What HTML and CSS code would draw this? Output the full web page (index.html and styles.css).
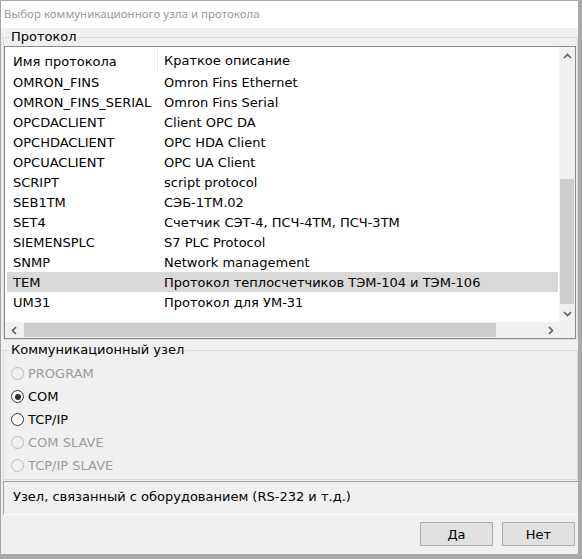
FILE: index.html
```html
<!DOCTYPE html>
<html lang="ru">
<head>
<meta charset="utf-8">
<title>Выбор коммуникационного узла и протокола</title>
<link rel="stylesheet" href="styles.css">
</head>
<body>
<div class="desk">
  <div class="win">
    <div class="title">Выбор коммуникационного узла и протокола</div>
    <div class="body">
      <fieldset class="group g1">
        <legend>Протокол</legend>
        <div class="listview">
          <div class="list">
            <div class="header">
              <div class="hcol c1">Имя протокола</div>
              <div class="hcol c2">Краткое описание</div>
            </div>
            <div class="rows">
              <div class="row"><span class="c1">OMRON_FINS</span><span class="c2">Omron Fins Ethernet</span></div>
              <div class="row"><span class="c1">OMRON_FINS_SERIAL</span><span class="c2">Omron Fins Serial</span></div>
              <div class="row"><span class="c1">OPCDACLIENT</span><span class="c2">Client OPC DA</span></div>
              <div class="row"><span class="c1">OPCHDACLIENT</span><span class="c2">OPC HDA Client</span></div>
              <div class="row"><span class="c1">OPCUACLIENT</span><span class="c2">OPC UA Client</span></div>
              <div class="row"><span class="c1">SCRIPT</span><span class="c2">script protocol</span></div>
              <div class="row"><span class="c1">SEB1TM</span><span class="c2">СЭБ-1ТМ.02</span></div>
              <div class="row"><span class="c1">SET4</span><span class="c2">Счетчик СЭТ-4, ПСЧ-4ТМ, ПСЧ-3ТМ</span></div>
              <div class="row"><span class="c1">SIEMENSPLC</span><span class="c2">S7 PLC Protocol</span></div>
              <div class="row"><span class="c1">SNMP</span><span class="c2">Network management</span></div>
              <div class="row sel"><span class="c1">TEM</span><span class="c2">Протокол теплосчетчиков ТЭМ-104 и ТЭМ-106</span></div>
              <div class="row"><span class="c1">UM31</span><span class="c2">Протокол для УМ-31</span></div>
            </div>
          </div>
          <div class="vscroll">
            <div class="arrow"><svg width="9" height="6" viewBox="0 0 9 6"><polyline points="1,5 4.5,1.5 8,5" class="chev"/></svg></div>
            <div class="vtrack"><div class="vthumb"></div></div>
            <div class="arrow"><svg width="9" height="6" viewBox="0 0 9 6"><polyline points="1,1 4.5,4.5 8,1" class="chev"/></svg></div>
          </div>
          <div class="hscroll">
            <div class="harrow"><svg width="6" height="9" viewBox="0 0 6 9"><polyline points="5,1 1.5,4.5 5,8" class="chev"/></svg></div>
            <div class="htrack"><div class="hthumb"></div></div>
            <div class="harrow"><svg width="6" height="9" viewBox="0 0 6 9"><polyline points="1,1 4.5,4.5 1,8" class="chev"/></svg></div>
          </div>
          <div class="corner"></div>
        </div>
      </fieldset>
      <fieldset class="group g2">
        <legend>Коммуникационный узел</legend>
        <div class="radios">
          <div class="radio disabled"><span class="dot"></span><span>PROGRAM</span></div>
          <div class="radio checked"><span class="dot"></span><span>COM</span></div>
          <div class="radio"><span class="dot"></span><span>TCP/IP</span></div>
          <div class="radio disabled"><span class="dot"></span><span>COM SLAVE</span></div>
          <div class="radio disabled"><span class="dot"></span><span>TCP/IP SLAVE</span></div>
        </div>
      </fieldset>
      <div class="desc">Узел, связанный с оборудованием (RS-232 и т.д.)</div>
      <div class="buttons">
        <button class="btn">Да</button>
        <button class="btn">Нет</button>
      </div>
    </div>
  </div>
</div>
</body>
</html>
```
FILE: styles.css
```css
html, body {
  margin: 0;
  padding: 0;
}
body {
  width: 582px;
  height: 559px;
  overflow: hidden;
  background: #a9a9a9;
  font-family: "DejaVu Sans", Verdana, sans-serif;
  font-size: 13px;
  color: #000;
}
.desk {
  width: 582px;
  height: 559px;
  padding-top: 1px;
  box-sizing: border-box;
}
.win {
  width: 577px;
  height: 553px;
  border-left: 1px solid #a4a4a4;
  background: #f0f0f0;
  display: flex;
  flex-direction: column;
}
.title {
  height: 27px;
  line-height: 26px;
  background: #fff;
  color: #9a9a9a;
  padding-left: 3px;
  font-family: "Noto Sans", "Open Sans", sans-serif;
  font-size: 11.5px;
}
.body {
  flex: 1;
  display: flex;
  flex-direction: column;
}
.group {
  margin: 0 0 0 2px;
  padding: 0;
  border: 1px solid #dcdcdc;
  min-width: 0;
}
.group legend {
  margin-left: 6px;
  padding: 0 1px;
  line-height: 14px;
  height: 14px;
}
.g1 {
  margin-top: 2px;
  padding-top: 2px;
}
.g2 {
  margin-top: 3px;
  padding: 5px 0 2px 0;
}
.radios {
  padding-left: 7px;
}
.listview {
  margin-right: 1px;
  border: 1px solid #8a8a8a;
  background: #fff;
  display: grid;
  grid-template-columns: 554px 16px;
  grid-template-rows: 275px 16px;
}
.list {
  overflow: hidden;
}
.header {
  height: 25px;
  display: flex;
  align-items: stretch;
}
.hcol {
  line-height: 27px;
  white-space: nowrap;
}
.hcol.c1 {
  width: 144px;
  padding-left: 8px;
  border-right: 1px solid #e5e5e5;
  margin-top: 1px;
}
.hcol.c2 {
  padding-left: 6px;
}
.rows {
  padding: 0 1px 0 2px;
}
.row {
  height: 20px;
  line-height: 21px;
  display: flex;
  white-space: nowrap;
}
.row .c1 {
  width: 144px;
  padding-left: 6px;
}
.row .c2 {
  padding-left: 7px;
}
.row.sel {
  background: #d9d9d9;
}
.vscroll {
  background: #f0f0f0;
  display: flex;
  flex-direction: column;
}
.arrow {
  height: 17px;
  display: flex;
  align-items: center;
  justify-content: center;
}
.vtrack {
  flex: 1;
  padding-top: 115px;
}
.vthumb {
  height: 125px;
  margin: 0 1px;
  background: #cdcdcd;
}
.hscroll {
  background: #f0f0f0;
  display: flex;
}
.harrow {
  width: 17px;
  display: flex;
  align-items: center;
  justify-content: center;
}
.htrack {
  flex: 1;
  padding-top: 1px;
}
.hthumb {
  width: 472px;
  height: 14px;
  margin-left: 2px;
  background: #cdcdcd;
}
.corner {
  background: #f0f0f0;
}
.chev {
  fill: none;
  stroke: #606060;
  stroke-width: 1.7;
}
.radio {
  height: 23px;
  display: flex;
  align-items: center;
  gap: 4px;
  font-size: 13px;
}
.radio .dot {
  width: 11px;
  height: 11px;
  border: 1px solid #333;
  border-radius: 50%;
  background: #fff;
  display: flex;
  align-items: center;
  justify-content: center;
}
.radio.checked .dot::after {
  content: "";
  width: 6px;
  height: 6px;
  border-radius: 50%;
  background: #333;
}
.radio.disabled {
  color: #9c9c9c;
}
.radio.disabled .dot {
  border-color: #bcbcbc;
  background: #f0f0f0;
}
.desc {
  margin: 1px 0 0 2px;
  height: 32px;
  line-height: 30px;
  padding-left: 9px;
  border-top: 1px solid #a0a0a0;
  border-left: 1px solid #a0a0a0;
  border-bottom: 1px solid #fff;
}
.buttons {
  flex: 1;
  display: flex;
  justify-content: flex-end;
  align-items: flex-start;
  gap: 9px;
  padding: 7px 3px 0 0;
}
.btn {
  width: 73px;
  height: 24px;
  margin: 0;
  padding: 0;
  border: 1px solid #adadad;
  background: #e1e1e1;
  font-family: "DejaVu Sans", Verdana, sans-serif;
  font-size: 13px;
  color: #000;
}
```
